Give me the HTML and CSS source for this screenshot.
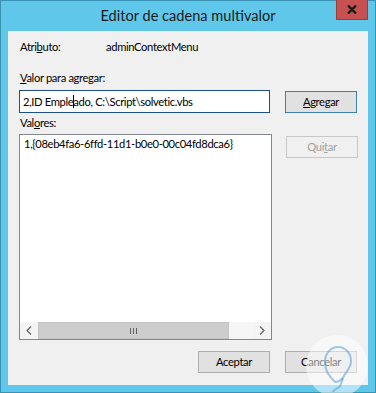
FILE: index.html
```html
<!DOCTYPE html>
<html>
<head>
<meta charset="utf-8">
<link rel="stylesheet" href="styles.css">
</head>
<body>
<div class="window">
  <div class="titlebar">
    <span class="title">Editor de cadena multivalor</span>
    <div class="close"><svg width="10" height="9" viewBox="0 0 10 9"><path d="M1 0.5 L9 8.5 M9 0.5 L1 8.5" stroke="#1a1a1a" stroke-width="2.4"/></svg></div>
  </div>
  <div class="client">
    <div class="attr-row">
      <span class="attr-label">Atri<u>b</u>uto:</span>
      <span class="attr-value">adminContextMenu</span>
    </div>
    <div class="label label-valor"><u>V</u>alor para agregar:</div>
    <div class="row">
      <div class="input">2,ID Emple<span class="ibeam"></span>ado, C:\Script\solvetic.vbs</div>
      <div class="btn btn-default"><u>A</u>gregar</div>
    </div>
    <div class="label label-valores">Val<u>o</u>res:</div>
    <div class="row row-list">
      <div class="listbox">
        <div class="list-items">1,{08eb4fa6-6ffd-11d1-b0e0-00c04fd8dca6}</div>
        <div class="hscroll">
          <div class="arrow"><svg width="6" height="9" viewBox="0 0 6 9"><path d="M5 0.5 L1 4.5 L5 8.5" fill="none" stroke="#606060" stroke-width="1.2"/></svg></div>
          <div class="thumb"><span class="grip"></span><span class="grip"></span><span class="grip"></span></div>
          <div class="track"></div>
          <div class="arrow"><svg width="6" height="9" viewBox="0 0 6 9"><path d="M1 0.5 L5 4.5 L1 8.5" fill="none" stroke="#606060" stroke-width="1.2"/></svg></div>
        </div>
      </div>
      <div class="btn btn-disabled">Qui<u>t</u>ar</div>
    </div>
    <div class="footer">
      <div class="btn">Aceptar</div>
      <div class="btn">Cancelar</div>
    </div>
  </div>
  <svg class="watermark" width="64" height="64" viewBox="0 0 64 64">
    <circle cx="32" cy="32" r="31" fill="rgba(255,255,255,0.5)"/>
    <path d="M30 48 C26 44 20 38 20 28 C20 19 26 13 33 13 C40 13 46 19 46 27 C46 35 40 38 38 44 C37 48 36 50 35 52 C33 55 28 55 28 58" fill="none" stroke="rgba(70,150,210,0.5)" stroke-width="2"/>
    <path d="M30 48 C33 48 36 46 38 44" fill="none" stroke="rgba(70,150,210,0.5)" stroke-width="2"/>
  </svg>
</div>
</body>
</html>
```

FILE: styles.css
```css
html, body {
  margin: 0;
  padding: 0;
}
body {
  font-family: Lato, "Liberation Sans", sans-serif;
  font-size: 11.2px;
  letter-spacing: -0.35px;
  color: #000;
}
u {
  text-decoration: underline;
  text-underline-offset: 1px;
}
.window {
  position: relative;
  width: 376px;
  height: 393px;
  box-sizing: border-box;
  background: #5ec7ea;
  border: 1px solid #3a93b5;
  padding: 0 7px 7px 7px;
  display: flex;
  flex-direction: column;
}
.titlebar {
  height: 30px;
  display: flex;
  align-items: center;
  justify-content: center;
}
.title {
  font-size: 14.6px;
  letter-spacing: 0;
  color: #1a1a1a;
  margin-top: -1px;
}
.close {
  position: absolute;
  top: -1px;
  right: 7px;
  width: 32px;
  height: 20px;
  box-sizing: border-box;
  background: #c75050;
  border: 1px solid #9c3d3d;
  border-top: none;
  display: flex;
  align-items: center;
  justify-content: center;
}
.client {
  flex: 1;
  background: #f0f0f0;
  padding: 0 0 0 11px;
  display: flex;
  flex-direction: column;
}
.attr-row {
  display: flex;
  margin-top: 8px;
  line-height: 16px;
}
.attr-label {
  width: 86px;
  margin-left: 1px;
}
.label {
  line-height: 16px;
  margin-left: 1px;
}
.label-valor {
  margin-top: 15px;
}
.label-valores {
  margin-top: 2px;
}
.row {
  display: flex;
  align-items: flex-start;
  margin-top: 4px;
}
.row-list {
  margin-top: 3px;
}
.input {
  position: relative;
  width: 251px;
  height: 23px;
  box-sizing: border-box;
  border: 1px solid #1e4f8a;
  background: #fff;
  padding-left: 3px;
  line-height: 21px;
}
.ibeam {
  display: inline-block;
  width: 1px;
  height: 13px;
  background: #000;
  vertical-align: -2px;
  margin: 0 -1px 0 0;
}
.btn {
  width: 72px;
  height: 22px;
  box-sizing: border-box;
  border: 1px solid #adadad;
  background: #e1e1e1;
  display: flex;
  align-items: center;
  justify-content: center;
  line-height: 16px;
}
.row .btn {
  margin-left: 14px;
}
.row .btn-default {
  border-color: #3c7fb1;
  margin-top: 1px;
  margin-left: 15px;
}
.btn-disabled {
  color: #a0a0a0;
  background: #f0f0f0;
  border-color: #c8c8c8;
  margin-top: 2px;
}
.listbox {
  width: 253px;
  height: 206px;
  box-sizing: border-box;
  border: 1px solid #828790;
  background: #fff;
  display: flex;
  flex-direction: column;
}
.list-items {
  flex: 1;
  padding: 1px 0 0 4px;
  line-height: 16px;
}
.hscroll {
  height: 17px;
  display: flex;
  background: #f0f0f0;
}
.arrow {
  width: 18px;
  height: 17px;
  display: flex;
  align-items: center;
  justify-content: center;
  background: #f4f4f4;
}
.thumb {
  width: 191px;
  height: 17px;
  box-sizing: border-box;
  background: #cdcdcd;
  border: 1px solid #c4c4c4;
  display: flex;
  align-items: center;
  justify-content: center;
  gap: 2px;
}
.grip {
  width: 1px;
  height: 6px;
  background: #606060;
}
.track {
  flex: 1;
  background: #f6f6f6;
}
.footer {
  display: flex;
  gap: 15px;
  margin-top: 11px;
  margin-left: 179px;
}
.watermark {
  position: absolute;
  left: 304px;
  top: 333px;
}
```
